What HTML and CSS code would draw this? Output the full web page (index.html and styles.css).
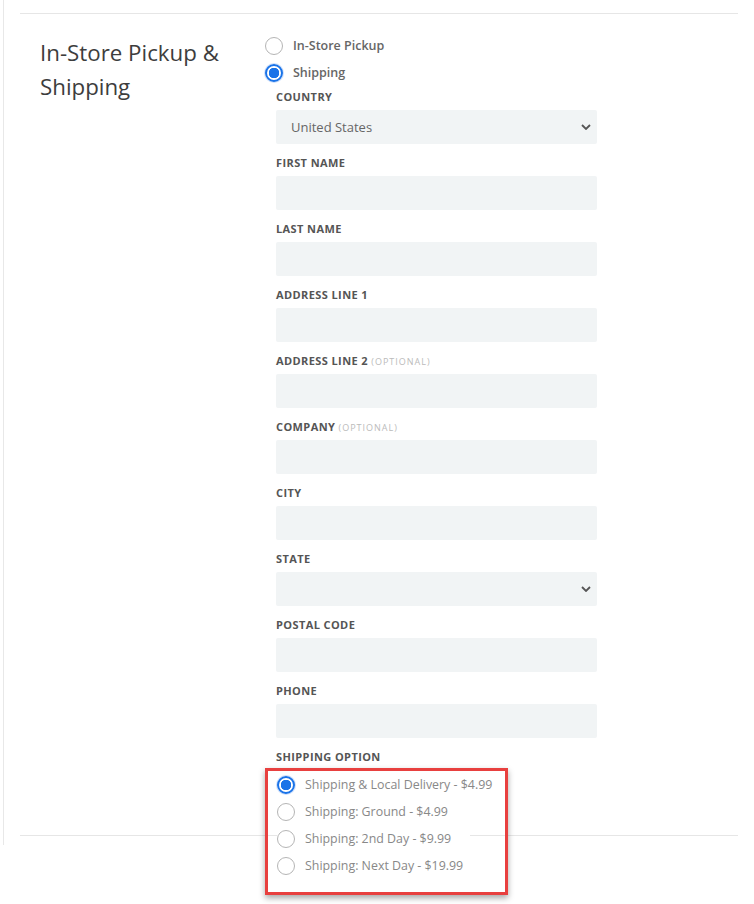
FILE: index.html
```html
<!DOCTYPE html>
<html lang="en">
  <head>
    <meta charset="UTF-8" />
    <meta name="viewport" content="width=device-width, initial-scale=1.0" />
    <title>Checkout - Shipping</title>
    <link rel="stylesheet" href="styles.css">
  </head>
  <body>
    <div class="page">
      <div class="section">
        <h2 class="section-title">In-Store Pickup &amp; Shipping</h2>
        <div class="section-body">
          <label class="choice">
            <input type="radio" name="method" value="pickup" />
            <span>In-Store Pickup</span>
          </label>
          <label class="choice">
            <input type="radio" name="method" value="shipping" checked />
            <span>Shipping</span>
          </label>

          <div class="fields">
            <div class="form-group">
              <label class="field-label" for="country">Country</label>
              <div class="select-wrap">
                <select id="country" class="field">
                  <option>United States</option>
                  <option>Canada</option>
                </select>
                <svg class="chevron" width="10" height="6" viewBox="0 0 10 6"><path d="M1 1l4 4 4-4" fill="none" stroke="#555" stroke-width="1.8"/></svg>
              </div>
            </div>
            <div class="form-group">
              <label class="field-label" for="firstName">First Name</label>
              <input type="text" id="firstName" class="field" />
            </div>
            <div class="form-group">
              <label class="field-label" for="lastName">Last Name</label>
              <input type="text" id="lastName" class="field" />
            </div>
            <div class="form-group">
              <label class="field-label" for="address1">Address Line 1</label>
              <input type="text" id="address1" class="field" />
            </div>
            <div class="form-group">
              <label class="field-label" for="address2">Address Line 2 <span class="optional">(Optional)</span></label>
              <input type="text" id="address2" class="field" />
            </div>
            <div class="form-group">
              <label class="field-label" for="company">Company <span class="optional">(Optional)</span></label>
              <input type="text" id="company" class="field" />
            </div>
            <div class="form-group">
              <label class="field-label" for="city">City</label>
              <input type="text" id="city" class="field" />
            </div>
            <div class="form-group">
              <label class="field-label" for="state">State</label>
              <div class="select-wrap">
                <select id="state" class="field">
                  <option></option>
                </select>
                <svg class="chevron" width="10" height="6" viewBox="0 0 10 6"><path d="M1 1l4 4 4-4" fill="none" stroke="#555" stroke-width="1.8"/></svg>
              </div>
            </div>
            <div class="form-group">
              <label class="field-label" for="postal">Postal Code</label>
              <input type="text" id="postal" class="field" />
            </div>
            <div class="form-group">
              <label class="field-label" for="phone">Phone</label>
              <input type="text" id="phone" class="field" />
            </div>

            <div class="field-label">Shipping Option</div>
            <div class="options-box">
              <div class="options">
                <label class="option">
                  <input type="radio" name="rate" checked />
                  <span>Shipping &amp; Local Delivery - $4.99</span>
                </label>
                <label class="option">
                  <input type="radio" name="rate" />
                  <span>Shipping: Ground - $4.99</span>
                </label>
                <label class="option">
                  <input type="radio" name="rate" />
                  <span>Shipping: 2nd Day - $9.99</span>
                </label>
                <label class="option">
                  <input type="radio" name="rate" />
                  <span>Shipping: Next Day - $19.99</span>
                </label>
              </div>
            </div>
          </div>
        </div>
      </div>
    </div>
  </body>
</html>
```

FILE: styles.css
```css
/* Checkout shipping section */
body {
  margin: 0;
  padding-bottom: 70px;
  font-family: "Open Sans", Arial, sans-serif;
  color: #444;
  background: #fff;
}
.page {
  margin-left: 3px;
  border-left: 1px solid #e8e8e8;
  padding: 13px 0 9px;
}
.section {
  margin: 0 16px 0 16px;
  border-top: 1px solid #e6e6e6;
  border-bottom: 1px solid #e6e6e6;
  padding: 22px 0 0 20px;
  display: grid;
  grid-template-columns: 225px 1fr;
}
.section-title {
  margin: 0;
  font-size: 22.3px;
  font-weight: 400;
  line-height: 34px;
  color: #3d3d3d;
}
.section-body {
  margin-top: -4px;
}

/* radios */
input[type="radio"] {
  appearance: none;
  margin: 0;
  width: 18px;
  height: 18px;
  border: 1.5px solid #b5b5b5;
  border-radius: 50%;
  background: #fff;
  flex-shrink: 0;
}
input[type="radio"]:checked {
  border: 2px solid #1a73e8;
  background: radial-gradient(circle, #1a73e8 0 5px, #fff 5.5px);
  box-shadow: 0 0 0 1px #cfe0fb;
}
.choice {
  display: flex;
  align-items: center;
  gap: 10px;
  height: 27px;
  font-size: 12.5px;
  font-weight: 600;
  color: #666;
}

/* fields */
.fields {
  padding: 3px 0 0 11px;
  width: 321px;
}
.form-group {
  margin-bottom: 11px;
}
.field-label {
  display: block;
  height: 16px;
  line-height: 16px;
  margin-bottom: 5px;
  font-size: 11px;
  font-weight: 700;
  text-transform: uppercase;
  letter-spacing: 0.4px;
  color: #555;
}
.optional {
  font-size: 9px;
  font-weight: 400;
  letter-spacing: 1px;
  color: #bbb;
}
.field {
  display: block;
  box-sizing: border-box;
  width: 321px;
  height: 34px;
  border: none;
  border-radius: 2px;
  background: #f1f4f5;
  padding: 0 15px;
  font-family: inherit;
  font-size: 13px;
  color: #666;
  appearance: none;
  outline: none;
}
.select-wrap {
  position: relative;
}
.chevron {
  position: absolute;
  right: 6px;
  top: 14px;
}

/* shipping options (highlighted) */
.options-box {
  margin: -2px 0 -60px -11px;
  width: 243px;
  box-sizing: border-box;
  border: 3px solid #e8403f;
  box-shadow: 0 3px 6px rgba(0, 0, 0, 0.35);
  padding: 0 0 13px 9px;
  background: transparent;
}
.options {
  width: 193px;
  background: #fff;
}
.option {
  display: flex;
  align-items: center;
  gap: 10px;
  height: 27px;
  font-size: 12.4px;
  color: #888;
  white-space: nowrap;
}
```
